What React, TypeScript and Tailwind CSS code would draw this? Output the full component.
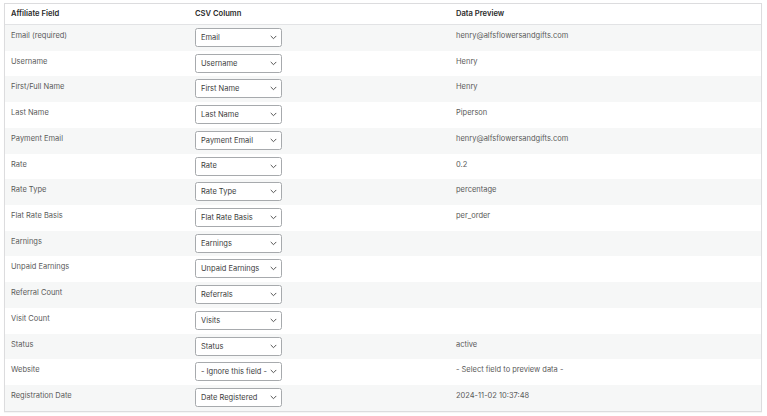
import React from 'react';

interface FieldRow {
  label: string;
  column: string;
  preview: string;
}

const rows: FieldRow[] = [
  { label: 'Email (required)', column: 'Email', preview: 'henry@alfsflowersandgifts.com' },
  { label: 'Username', column: 'Username', preview: 'Henry' },
  { label: 'First/Full Name', column: 'First Name', preview: 'Henry' },
  { label: 'Last Name', column: 'Last Name', preview: 'Piperson' },
  { label: 'Payment Email', column: 'Payment Email', preview: 'henry@alfsflowersandgifts.com' },
  { label: 'Rate', column: 'Rate', preview: '0.2' },
  { label: 'Rate Type', column: 'Rate Type', preview: 'percentage' },
  { label: 'Flat Rate Basis', column: 'Flat Rate Basis', preview: 'per_order' },
  { label: 'Earnings', column: 'Earnings', preview: '' },
  { label: 'Unpaid Earnings', column: 'Unpaid Earnings', preview: '' },
  { label: 'Referral Count', column: 'Referrals', preview: '' },
  { label: 'Visit Count', column: 'Visits', preview: '' },
  { label: 'Status', column: 'Status', preview: 'active' },
  { label: 'Website', column: '- Ignore this field -', preview: '- Select field to preview data -' },
  { label: 'Registration Date', column: 'Date Registered', preview: '2024-11-02 10:37:48' },
];

const ColumnSelect: React.FC<{ value: string }> = ({ value }) => (
  <div className="relative mt-[3px] w-[87px] h-[19px]">
    <select
      defaultValue={value}
      className="appearance-none w-full h-full bg-white border border-[#a7aaad] rounded-[2.5px] pl-[5px] pr-[12px] text-[7.5px] text-[#3c3c3c] outline-none"
    >
      <option value={value}>{value}</option>
    </select>
    {/* chevron */}
    <svg
      className="absolute right-[5px] top-[7px] pointer-events-none"
      width="7"
      height="5"
      viewBox="0 0 7 5"
      fill="none"
    >
      <path d="M1 1.2 L3.5 3.7 L6 1.2" stroke="#555555" strokeWidth="1" strokeLinecap="round" strokeLinejoin="round" />
    </svg>
  </div>
);

export default function App() {
  return (
    <div className="w-[767px] h-[416px] bg-white pt-[3px] pl-[4px] font-['Inter','Liberation_Sans',sans-serif]">
      <div className="w-[758px] border border-[#dcdcde] shadow-[0_1px_1px_rgba(0,0,0,0.04)]">
        {/* header */}
        <div className="grid grid-cols-[184px_261px_1fr] h-[21px] items-center border-b border-[#e2e3e5] text-[7.6px] font-semibold text-[#2a2a2a]">
          <div className="pl-[6px]">Affiliate Field</div>
          <div className="pl-[6px]">CSV Column</div>
          <div className="pl-[6px]">Data Preview</div>
        </div>

        {rows.map((row, i) => (
          <div
            key={row.label}
            className={`grid grid-cols-[184px_261px_1fr] h-[25.73px] items-start text-[7.5px] text-[#5a5a5a] ${
              i % 2 === 0 ? 'bg-[#f6f7f7]' : 'bg-white'
            }`}
          >
            <div className="pl-[6px] pt-[5px]">{row.label}</div>
            <div className="pl-[6px]">
              <ColumnSelect value={row.column} />
            </div>
            <div className="pl-[6px] pt-[5px]">{row.preview}</div>
          </div>
        ))}
      </div>
    </div>
  );
}
